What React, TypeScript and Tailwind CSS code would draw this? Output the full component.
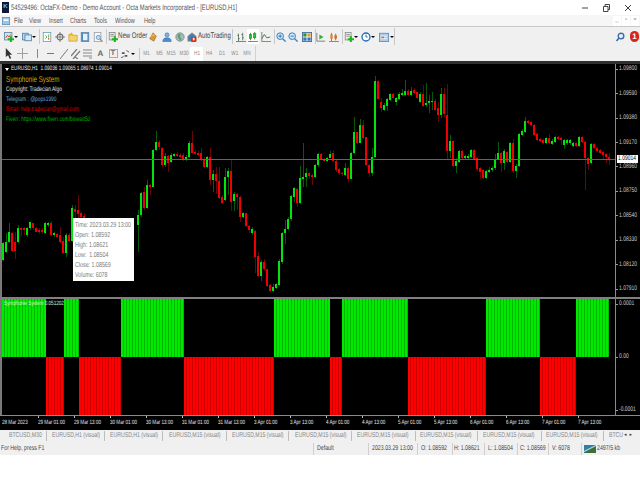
import type { ReactNode } from "react"

type Candle = [string, number, number, number?, number?]

// body top, body bottom, wick high, wick low. values are read off 3x crops, so they are divided by 3 below
const zoneA: Candle[] = [
  ["g", 190, 240, 185, 242], ["g", 185, 215, 160, 218], ["g", 155, 185, 130, 190], ["r", 158, 212, 155, 215],
  ["r", 185, 212, 155, 238], ["g", 145, 185, 135, 190], ["r", 145, 150, 140, 168], ["r", 145, 150, 142, 165],
  ["g", 145, 165, 140, 170], ["g", 127, 145, 125, 150], ["r", 130, 145, 128, 150], ["r", 145, 155, 142, 157],
  ["r", 150, 157], ["r", 150, 157], ["g", 130, 160, 125, 162], ["g", 130, 135, 125, 140], ["r", 130, 165, 122, 168],
  ["g", 160, 165], ["r", 163, 170], ["r", 165, 185, 140, 188], ["r", 183, 218, 170, 220], ["g", 165, 218, 160, 232],
  ["r", 165, 182, 160, 185], ["g", 85, 182, 75, 185], ["r", 87, 95, 75, 120], ["r", 90, 102, 45, 125],
  ["r", 100, 110, 95, 125], ["r", 108, 120, 100, 130],
]
const zoneB: Candle[] = [
  ["g", 285, 315, 270, 396], ["g", 218, 285, 215, 290], ["r", 215, 265, 200, 270], ["g", 195, 265, 180, 268],
  ["r", 195, 200, 192, 225], ["g", 90, 200, 88, 202], ["g", 65, 90, 33, 92], ["r", 65, 82, 60, 90],
  ["r", 85, 135, 80, 142], ["g", 108, 135, 100, 140], ["r", 108, 130, 105, 155], ["g", 105, 125, 100, 130],
  ["g", 103, 107], ["r", 102, 107], ["r", 105, 110], ["r", 105, 118], ["g", 110, 118], ["g", 68, 110, 62, 113],
  ["r", 70, 98, 33, 100], ["r", 97, 102, 90, 105], ["r", 98, 104], ["r", 98, 118, 85, 122], ["r", 118, 142, 112, 145],
  ["g", 112, 142, 108, 145], ["r", 112, 180, 85, 195], ["g", 162, 180, 150, 215], ["r", 162, 182, 140, 222],
]
const zoneC: Candle[] = [
  ["r", 362, 415, 320, 418], ["r", 412, 428, 405, 432], ["g", 350, 420, 325, 422], ["g", 333, 352, 325, 405],
  ["r", 333, 425, 300, 452], ["g", 403, 422, 395, 452], ["r", 403, 412, 400, 450], ["r", 412, 470, 408, 485],
  ["g", 460, 472, 455, 475], ["r", 460, 498, 458, 500], ["r", 497, 510, 495, 520], ["g", 508, 520, 500, 524],
  ["r", 512, 590, 510, 640], ["r", 588, 648, 575, 650], ["g", 606, 648, 600, 662], ["r", 606, 628, 598, 632],
  ["r", 628, 678, 626, 682], ["r", 676, 692, 672, 696], ["g", 680, 692, 672, 695], ["g", 673, 685, 670, 688],
  ["g", 603, 675, 598, 678], ["g", 520, 605, 515, 612], ["g", 508, 520, 480, 552], ["g", 478, 508, 470, 510],
  ["g", 408, 478, 405, 482], ["g", 385, 410, 380, 425], ["r", 387, 428, 385, 440], ["g", 355, 428, 318, 432],
  ["g", 350, 358, 248, 380], ["g", 340, 352, 325, 382], ["r", 340, 348, 335, 358], ["r", 345, 352, 342, 375],
  ["g", 316, 352, 312, 355], ["g", 282, 316, 278, 320], ["r", 282, 298, 278, 300], ["r", 298, 303, 295, 306],
  ["g", 293, 303, 290, 305], ["g", 282, 293, 272, 295], ["r", 280, 303, 270, 306], ["r", 302, 330, 300, 335],
  ["r", 328, 340, 325, 345], ["r", 338, 343, 335, 348], ["g", 323, 345, 310, 348], ["r", 323, 358, 320, 365],
  ["g", 280, 356, 276, 358], ["g", 217, 280, 170, 283], ["r", 217, 248, 215, 252], ["g", 194, 248, 178, 250],
  ["r", 194, 233, 180, 236], ["r", 232, 315, 230, 318], ["r", 314, 340, 312, 352], ["g", 291, 340, 265, 348],
  ["g", 62, 291, 48, 294], ["r", 62, 116, 60, 118], ["r", 126, 145, 115, 155], ["g", 135, 150, 130, 153],
  ["g", 118, 137, 115, 152], ["g", 103, 120, 100, 122], ["r", 103, 115, 100, 118], ["g", 115, 125, 112, 135],
  ["g", 103, 117, 95, 120], ["g", 100, 104, 88, 108], ["g", 93, 105, 60, 108], ["r", 93, 106, 88, 108],
  ["g", 92, 104, 80, 107], ["r", 90, 98, 85, 102], ["r", 97, 115, 95, 118], ["g", 102, 125, 95, 128],
  ["r", 101, 138, 75, 142],
]
const zoneD: Candle[] = [
  ["g", 128, 135, 70, 140], ["g", 124, 128, 105, 160], ["g", 122, 127, 95, 150], ["r", 122, 150, 118, 152],
  ["r", 145, 165, 125, 185], ["g", 102, 165, 85, 175], ["r", 102, 162, 85, 172], ["r", 165, 272, 72, 298],
  ["g", 243, 272, 225, 295], ["r", 243, 318, 240, 320], ["g", 303, 318, 295, 338], ["g", 273, 305, 270, 308],
  ["r", 273, 293, 270, 296], ["g", 288, 294, 285, 298], ["g", 287, 293, 282, 296], ["g", 270, 290, 266, 294],
  ["r", 270, 296, 268, 298], ["r", 293, 328, 290, 332], ["r", 325, 335, 322, 358], ["r", 330, 355, 328, 358],
  ["g", 333, 353, 330, 356], ["g", 330, 336, 322, 340], ["g", 325, 330, 318, 335], ["g", 296, 325, 282, 330],
  ["g", 280, 297, 245, 300], ["r", 280, 308, 275, 335], ["g", 273, 310, 268, 330], ["r", 275, 307, 272, 310],
  ["g", 250, 305, 245, 308], ["r", 250, 333, 238, 340], ["g", 317, 333, 312, 355], ["g", 223, 318, 220, 322],
  ["g", 212, 225, 208, 228], ["g", 182, 215, 172, 218], ["r", 183, 190, 180, 193], ["r", 185, 195, 182, 198],
  ["r", 195, 225, 192, 228], ["r", 223, 240, 220, 243], ["r", 238, 244, 235, 247], ["r", 240, 248, 237, 251],
  ["g", 235, 248, 230, 252], ["r", 235, 250, 223, 253], ["g", 243, 251, 238, 255], ["g", 232, 245, 229, 248],
  ["r", 232, 238, 229, 241], ["r", 235, 240, 232, 255], ["g", 240, 255, 236, 268], ["g", 240, 250, 236, 254],
  ["g", 240, 248, 236, 256], ["g", 248, 257, 245, 260], ["r", 250, 258, 247, 262], ["g", 230, 258, 227, 262],
  ["r", 230, 245, 227, 248], ["r", 245, 295, 242, 390], ["r", 295, 312, 292, 330], ["g", 253, 310, 250, 313],
  ["r", 253, 265, 250, 268], ["r", 265, 273, 262, 276], ["r", 270, 280, 267, 283], ["r", 277, 285, 274, 296],
  ["r", 282, 292, 279, 308], ["r", 290, 298, 280, 315],
]

const zones: { start: number; y0: number; rows: Candle[] }[] = [
  { start: 0, y0: 180, rows: zoneA },
  { start: 45, y0: 120, rows: zoneB },
  { start: 72, y0: 60, rows: zoneC },
  { start: 141, y0: 60, rows: zoneD },
]

function PriceChart() {
  return (
    <svg viewBox="2 64 613 233" className="absolute inset-0 h-full w-full" shapeRendering="crispEdges">
      {zones.map((z) =>
        z.rows.map(([c, top, bottom, hi, lo], i) => {
          const x = 2 + (z.start + i) * 3
          const t = z.y0 + top / 3
          const b = z.y0 + bottom / 3
          const h = z.y0 + (hi ?? top - 5) / 3
          const l = z.y0 + (lo ?? bottom + 5) / 3
          return (
            <g key={z.start + i}>
              <rect x={x + 0.5} y={h} width={1} height={l - h} fill={c === "g" ? "#085808" : "#6a0505"} />
              <rect x={x} y={t} width={2} height={Math.max(b - t, 1)} fill={c === "g" ? "#00e60a" : "#f00000"} />
            </g>
          )
        }),
      )}
      <rect x={2} y={159} width={613} height={1} fill="#62646a" />
    </svg>
  )
}

const blocks: [number, number, string][] = [
  [2, 46, "g"], [46, 64, "r"], [64, 79, "g"], [79, 121, "r"], [121, 184, "g"], [184, 274, "r"], [274, 330, "g"],
  [330, 342, "r"], [342, 408, "g"], [408, 486, "r"], [486, 540, "g"], [540, 576, "r"], [576, 609, "g"],
]

function Histogram() {
  const bars: ReactNode[] = []
  blocks.forEach(([from, to, c]) => {
    const green = c === "g"
    bars.push(<rect key={from} x={from} y={green ? 299 : 357} width={to - from} height={58} fill={green ? "#00b800" : "#cc0000"} />)
    for (let x = from; x < to - 1; x += 3) {
      bars.push(<rect key={from + "-" + x} x={x} y={green ? 299 : 357} width={2} height={58} fill={green ? "#00ea00" : "#ff0000"} />)
    }
  })
  return (
    <svg viewBox="2 299 613 116" className="absolute inset-0 h-full w-full" shapeRendering="crispEdges">
      {bars}
    </svg>
  )
}

// the screenshot was squeezed horizontally, so all small text is narrowed the same way
function Sq({ children, className = "" }: { children: ReactNode; className?: string }) {
  return <span className={"inline-block origin-left scale-x-[0.74] whitespace-nowrap " + className}>{children}</span>
}

function Ic({ children }: { children: ReactNode }) {
  return (
    <svg viewBox="0 0 12 12" className="block h-[10px] w-[10px] shrink-0">
      {children}
    </svg>
  )
}

const Caret = () => (
  <span className="flex w-[4px] shrink-0 justify-center">
    <span className="h-0 w-0 border-x-2 border-t-2 border-x-transparent border-t-black" />
  </span>
)

const Plus = () => <path d="M7 5h2.500v2.500H12V10H9.500v2H7v-2H4.500V7.500H7z" fill="#1bb61b" />

const NewChart = () => (
  <Ic>
    <rect x="0.500" y="0.500" width="9" height="9" fill="#cfe2ee" stroke="#5c86a8" />
    <path d="M2 7l2-3 2 2 2-3" stroke="#d2342a" fill="none" />
    <Plus />
  </Ic>
)
const Profiles = () => (
  <Ic>
    <rect x="0.500" y="1.500" width="7" height="8" fill="#bcd6ec" stroke="#4d7fae" />
    <rect x="3.500" y="3.500" width="8" height="7" fill="#d9e9f6" stroke="#4d7fae" />
  </Ic>
)
const Market = () => (
  <Ic>
    <rect x="1.500" y="0.500" width="9" height="11" fill="#fff" stroke="#7b9ab4" />
    <path d="M4 4l2 2-2 2M8 3v3" stroke="#1bb61b" fill="none" />
    <path d="M8 6l-1 3h2z" fill="#e03a20" />
  </Ic>
)
const Cross = () => (
  <Ic>
    <circle cx="6" cy="6" r="3.500" fill="none" stroke="#6e6e6e" strokeWidth="1.300" />
    <path d="M6 0v12M0 6h12" stroke="#6e6e6e" />
  </Ic>
)
const Folder = () => (
  <Ic>
    <path d="M1 3h4l1 1h5v7H1z" fill="#f4d36b" stroke="#b58f2c" strokeWidth="0.700" />
    <path d="M4 0l1 2h2L5.400 3.200 6 5 4 4 2 5l.6-1.800L1 2h2z" fill="#f2b21e" />
  </Ic>
)
const Book = () => (
  <Ic>
    <rect x="1.500" y="0.500" width="9" height="11" fill="#3f7fc0" stroke="#6a8bab" />
    <rect x="3.500" y="2" width="5.500" height="8" fill="#e8f1f8" />
  </Ic>
)
const DocSearch = () => (
  <Ic>
    <rect x="1.500" y="0.500" width="8" height="11" fill="#f7f7f7" stroke="#9aa3ad" />
    <circle cx="6.500" cy="6.500" r="2.500" fill="#c5dff2" stroke="#5f8fb5" />
    <path d="M8.500 8.500l3 3" stroke="#a77a3d" strokeWidth="1.300" />
  </Ic>
)
const OrderIc = () => (
  <Ic>
    <rect x="1.500" y="0.500" width="7" height="9" fill="#e8e8e8" stroke="#8b8b8b" />
    <path d="M3 3h4M3 5h4" stroke="#8b8b8b" />
    <Plus />
  </Ic>
)
const Gold = () => (
  <Ic>
    <path d="M6 1l4 4-3 6-5-3z" fill="#d49a35" stroke="#96661a" strokeWidth="0.700" />
    <path d="M3 6l3-3 2 2" stroke="#f4d38c" fill="none" />
  </Ic>
)
const Person = () => (
  <Ic>
    <circle cx="6" cy="3.500" r="2.500" fill="#7fb0de" stroke="#3d78b5" strokeWidth="0.700" />
    <path d="M1 11.500c0-3.500 2-4.500 5-4.500s5 1 5 4.500z" fill="#4d8ccb" stroke="#2f6aa8" strokeWidth="0.700" />
  </Ic>
)
const Globe = () => (
  <Ic>
    <circle cx="6" cy="6" r="5" fill="#a9b9c4" stroke="#7a8a96" />
    <path d="M4 2l3 1-1 3 2 2-2 3-1-3-2-2z" fill="#5fa066" />
  </Ic>
)
const Shield = () => (
  <Ic>
    <path d="M1 5l5-4 5 4v6H1z" fill="#3f7dc2" stroke="#cf8a2a" strokeWidth="0.800" />
    <rect x="5" y="6" width="6" height="6" rx="1" fill="#e02a1c" />
    <rect x="7" y="7" width="2" height="3" fill="#fff" />
  </Ic>
)
const BarsIc = () => (
  <Ic>
    <path d="M3 2v9M1.500 4H3M3 8h1.500M8 1v9M6.500 3H8M8 7h1.500M0 11.500h12" stroke="#4e6b52" fill="none" />
  </Ic>
)
const CandlesIc = () => (
  <Ic>
    <path d="M3 1v9M8 0v9M0 11.500h12" stroke="#4e6b52" />
    <rect x="1.500" y="3" width="3" height="5" fill="#27c127" stroke="#2e6b2e" strokeWidth="0.500" />
    <rect x="6.500" y="2" width="3" height="5" fill="#27c127" stroke="#2e6b2e" strokeWidth="0.500" />
  </Ic>
)
const LineIc = () => (
  <Ic>
    <path d="M1 0v11.500h11" stroke="#6c6c6c" fill="none" />
    <path d="M1 8l3-5 3 4 4-1" stroke="#4e7a52" fill="none" strokeWidth="1.200" />
  </Ic>
)
const Mag = ({ sign }: { sign: string }) => (
  <Ic>
    <circle cx="5" cy="5" r="4" fill="#cfe6f7" stroke="#3b82c4" strokeWidth="1.200" />
    <path d={sign} stroke="#2467a8" />
    <path d="M8 8l3.500 3.500" stroke="#3b82c4" strokeWidth="1.600" />
  </Ic>
)
const Tile = () => (
  <Ic>
    <rect x="0.500" y="0.500" width="11" height="11" fill="#fff" stroke="#37648f" />
    <rect x="1.500" y="1.500" width="4" height="4" fill="#2f8f3a" />
    <rect x="6.500" y="1.500" width="4" height="4" fill="#d9a32c" />
    <rect x="1.500" y="6.500" width="4" height="4" fill="#3c78c0" />
    <rect x="6.500" y="6.500" width="4" height="4" fill="#3c78c0" />
  </Ic>
)
const Shift = () => (
  <Ic>
    <path d="M1 1v10h10" stroke="#6c6c6c" fill="none" />
    <path d="M4 3v6l5-3z" fill="#2fb52f" />
  </Ic>
)
const AutoScroll = () => (
  <Ic>
    <path d="M3 1v10M8 2v8M0 11.500h12" stroke="#6c6c6c" />
    <rect x="1.500" y="3" width="3" height="5" fill="#e08a2a" />
    <rect x="6.500" y="4" width="3" height="4" fill="#e0622a" />
  </Ic>
)
const Clock = () => (
  <Ic>
    <circle cx="6" cy="6" r="4.800" fill="#fff" stroke="#1f6fc0" strokeWidth="1.600" />
    <path d="M6 3v3h2" stroke="#1f4f80" fill="none" />
  </Ic>
)
const Calendar = () => (
  <Ic>
    <rect x="0.500" y="1.500" width="11" height="10" fill="#a9cdec" stroke="#5d8fbe" />
    <path d="M2 5h8M2 8h8" stroke="#fff" />
    <rect x="3" y="5.500" width="3" height="2" fill="#e26a3a" />
  </Ic>
)

const Sep = () => <span className="block h-[15px] w-px shrink-0 bg-[#c9c9c9]" />

function TitleBar() {
  return (
    <div className="flex h-[15px] shrink-0 items-center bg-white">
      <span className="ml-[2px] flex h-[11px] w-[7px] items-center justify-center bg-[#101838] text-[6px] font-bold text-[#5ac8fa]">K</span>
      <span className="ml-[2px] w-[500px] shrink-0 text-[7.900px] text-[#555]">
        <Sq>54529496: OctaFX-Demo - Demo Account - Octa Markets Incorporated - [EURUSD,H1]</Sq>
      </span>
      <div className="ml-auto flex items-center">
        <svg viewBox="0 0 8 8" className="mr-[13px] h-2 w-2">
          <path d="M1 4h6" stroke="#444" strokeWidth="1" />
        </svg>
        <svg viewBox="0 0 8 8" className="mr-[14px] h-2 w-2">
          <path d="M1.500 2.500h4.500v5h-4.500zM3 2.500v-2h4.500v5h-1.500" stroke="#444" fill="none" />
        </svg>
        <svg viewBox="0 0 8 8" className="mr-[8px] h-2 w-2">
          <path d="M1 1l6 6M7 1l-6 6" stroke="#444" />
        </svg>
      </div>
    </div>
  )
}

const menus: [string, string][] = [
  ["File", "w-[15px]"], ["View", "w-[20px]"], ["Insert", "w-[21px]"], ["Charts", "w-[24px]"], ["Tools", "w-[21px]"], ["Window", "w-[29px]"], ["Help", "w-[20px]"],
]

function MenuBar() {
  return (
    <div className="flex h-[12px] shrink-0 items-center border-b border-[#c8c8c8] bg-[#f6f6f6] text-[7.500px] text-[#555]">
      <svg viewBox="0 0 10 10" className="ml-[2px] mr-[4px] h-[10px] w-[8px]">
        <rect x="0.500" y="0.500" width="9" height="9" fill="#9cc5e8" stroke="#5b8fc2" />
        <rect x="2" y="3" width="6" height="2" fill="#fff" />
      </svg>
      {menus.map(([m, c]) => (
        <span key={m} className={c}>
          <Sq>{m}</Sq>
        </span>
      ))}
      <div className="ml-auto flex items-center gap-px pr-px text-[6px] text-[#777]">
        <span className="flex h-[10px] w-[8px] items-center justify-center bg-white">_</span>
        <span className="flex h-[10px] w-[8px] items-center justify-center bg-white">▫</span>
        <span className="flex h-[10px] w-[8px] items-center justify-center bg-white">×</span>
      </div>
    </div>
  )
}

function MainToolbar() {
  return (
    <div className="flex h-[19px] shrink-0 items-center bg-[#f0f0f0] text-[8.200px] text-[#444]">
      <div className="flex h-[17px] w-[395px] items-center border-r border-[#c8c8c8] pl-[4px]">
        <NewChart />
        <Caret />
        <span className="ml-[4px]"><Profiles /></span>
        <Caret />
        <span className="ml-[3px]"><Sep /></span>
        <span className="ml-[2px]"><Market /></span>
        <span className="ml-[3px]"><Cross /></span>
        <span className="ml-[3px]"><Folder /></span>
        <span className="ml-[2px]"><Book /></span>
        <span className="ml-[3px]"><DocSearch /></span>
        <span className="ml-[3px]"><Sep /></span>
        <span className="ml-[1px]"><OrderIc /></span>
        <span className="w-[29px] shrink-0"><Sq>New Order</Sq></span>
        <span className="ml-[1px]"><Gold /></span>
        <span className="ml-[4px]"><Person /></span>
        <span className="ml-[3px]"><Globe /></span>
        <span className="ml-[2px]"><Shield /></span>
        <span className="ml-[1px] w-[33px] shrink-0"><Sq>AutoTrading</Sq></span>
        <span className="ml-[1px]"><Sep /></span>
        <span className="ml-[3px]"><BarsIc /></span>
        <span className="ml-[1px] flex h-[15px] w-[12px] items-center justify-center bg-white"><CandlesIc /></span>
        <span className="ml-[2px]"><LineIc /></span>
        <span className="ml-[3px]"><Sep /></span>
        <span className="ml-[1px]"><Mag sign="M3 5h4M5 3v4" /></span>
        <span className="ml-[2px]"><Mag sign="M3 5h4" /></span>
        <span className="ml-[4px]"><Tile /></span>
        <span className="ml-[3px]"><Sep /></span>
        <span><Shift /></span>
        <span className="ml-[3px]"><AutoScroll /></span>
        <span className="ml-[3px]"><Sep /></span>
        <span className="ml-[1px]"><OrderIc /></span>
        <Caret />
        <span className="ml-[3px]"><Clock /></span>
        <Caret />
        <span className="ml-[4px]"><Calendar /></span>
        <span className="ml-[1px]"><Caret /></span>
      </div>
      <div className="ml-auto flex items-center pr-[1px]">
        <svg viewBox="0 0 10 10" className="mr-[5px] h-[10px] w-[10px]">
          <circle cx="6" cy="4" r="2.800" fill="none" stroke="#3a6ea8" strokeWidth="1.400" />
          <path d="M4 6L1.500 9" stroke="#3a6ea8" strokeWidth="1.600" />
        </svg>
        <span className="flex h-[11px] w-[9px] items-center justify-center rounded-full bg-[#d6261c] text-[8px] font-bold text-white">1</span>
      </div>
    </div>
  )
}

const periods = ["M1", "M5", "M15", "M30", "H1", "H4", "D1", "W1", "MN"]

function DrawToolbar() {
  return (
    <div className="flex h-[15px] shrink-0 items-center bg-[#f0f0f0]">
      <div className="flex h-[15px] w-[256px] items-center border-r border-[#d2d2d2] pl-[2px] text-[#777]">
        <span className="flex w-[13px] justify-center">
          <svg viewBox="0 0 10 12" className="h-[11px] w-[9px]">
            <path d="M2 0v10l2.500-2 2 4 1.500-1-2-3.500h3z" fill="#333" />
          </svg>
        </span>
        <span className="flex w-[14px] justify-center">
          <svg viewBox="0 0 12 12" className="h-[11px] w-[11px]">
            <path d="M6 0v12M0 6h12" stroke="#999" />
          </svg>
        </span>
        <span className="ml-[1px] flex w-[14px] justify-center">
          <span className="h-[9px] w-px bg-[#888]" />
        </span>
        <span className="flex w-[13px] justify-center">
          <span className="h-px w-[7px] bg-[#777]" />
        </span>
        <span className="flex w-[13px] justify-center">
          <svg viewBox="0 0 8 10" className="h-[10px] w-[8px]">
            <path d="M0 10L8 0" stroke="#777" />
          </svg>
        </span>
        <span className="flex w-[12px] justify-center">
          <svg viewBox="0 0 10 10" className="h-[10px] w-[10px]">
            <path d="M0 7L6 0M2 10l7-8M4 8l3 2" stroke="#777" strokeWidth="1.200" fill="none" />
          </svg>
        </span>
        <span className="flex w-[12px] justify-center">
          <svg viewBox="0 0 10 10" className="h-[10px] w-[10px]">
            <path d="M0 1h9M0 4h9M0 7h9M6 9h3" stroke="#888" fill="none" />
          </svg>
        </span>
        <span className="w-[13px] text-center text-[8px] font-bold leading-none text-[#666]">A</span>
        <span className="flex w-[12px] justify-center">
          <span className="flex h-[9px] w-[9px] items-center justify-center border border-[#aaa] text-[7px] font-bold leading-none text-[#666]">T</span>
        </span>
        <span className="flex w-[12px] justify-center">
          <svg viewBox="0 0 10 10" className="h-[10px] w-[9px]">
            <path d="M1 3h3v2H1zM4 6h3v2H4z" fill="#555" />
            <path d="M6 1l3 2M0 9l3-1" stroke="#555" fill="none" />
          </svg>
        </span>
        <Caret />
        <span className="ml-[4px] h-[12px] w-px bg-[#c9c9c9]" />
        <div className="flex text-[6.300px] text-[#888]">
          {periods.map((p) => (
            <span key={p} className={p === "H1" ? "flex h-[14px] w-[12.600px] items-center justify-center bg-white" : "flex h-[14px] w-[12.600px] items-center justify-center"}>
              <span className="inline-block scale-x-[0.74] whitespace-nowrap">{p}</span>
            </span>
          ))}
        </div>
      </div>
    </div>
  )
}

const prices = ["1.09800", "1.09590", "1.09380", "1.09170", "1.08960", "1.08750", "1.08540", "1.08330", "1.08120", "1.07910"]

const ticks = [
  "29 Mar 01:00", "29 Mar 13:00", "30 Mar 01:00", "30 Mar 13:00", "31 Mar 01:00", "31 Mar 13:00", "3 Apr 01:00", "3 Apr 13:00",
  "4 Apr 01:00", "4 Apr 13:00", "5 Apr 01:00", "5 Apr 13:00", "6 Apr 01:00", "6 Apr 13:00", "7 Apr 01:00", "7 Apr 13:00",
]

const Tick = () => <span className="mr-[1px] h-px w-[2px] shrink-0 bg-[#9a9a9a]" />

function Chart() {
  return (
    <div className="flex h-[369px] shrink-0 flex-col border-t-[3px] border-t-[#303030] bg-black">
      <div className="flex h-[233px] shrink-0">
        <div className="h-full w-[2px] bg-[#7a7a7a]" />
        <div className="relative h-full w-[613px] overflow-hidden">
          <PriceChart />
          <div className="absolute left-[3px] top-[1px] flex items-center text-[6.300px] leading-[8px] text-[#e8e8e8]">
            <span className="mr-[2px] h-0 w-0 border-x-[2px] border-t-[3px] border-x-transparent border-t-white" />
            <Sq>EURUSD,H1&nbsp; 1.09036 1.09065 1.08974 1.09014</Sq>
          </div>
          <div className="absolute left-[4px] top-[10px] flex flex-col items-start text-[6.600px] leading-[10px]">
            <Sq className="text-[8.400px] leading-[11px] text-[#d4a800]">Symphonie System</Sq>
            <Sq className="text-[#e8e8e8]">Copyright: Tradecian Algo</Sq>
            <Sq className="text-[#64a6d8]">Telegram : @pops1990</Sq>
            <Sq className="text-[#d80000]">Email: help.tradecian@gmail.com</Sq>
            <Sq className="text-[#00b000]">Fiverr: https://www.fiverr.com/biswait50</Sq>
          </div>
          <div className="absolute left-[71px] top-[154px] flex h-[63px] w-[61px] flex-col items-start justify-center bg-white pl-[2px] text-[7.200px] leading-[10px] text-[#7c7c7c]">
            <Sq>Time: 2023.03.29 13:00</Sq>
            <Sq>Open: 1.08592</Sq>
            <Sq>High: 1.08621</Sq>
            <Sq>Low:&nbsp; 1.08504</Sq>
            <Sq>Close: 1.08569</Sq>
            <Sq>Volume: 6078</Sq>
          </div>
        </div>
        <div className="relative flex h-full flex-1 flex-col overflow-hidden border-l border-l-[#8a8a8a] text-[6.700px] text-[#cfcfcf]">
          {prices.map((p) => (
            <span key={p} className="flex h-[24.440px] shrink-0 items-center first:mt-[-7px]">
              <Tick />
              <Sq>{p}</Sq>
            </span>
          ))}
          <span className="absolute left-[1px] top-[91px] h-[8px] w-[21px] bg-white pl-[1px] text-[6.700px] leading-[8px] text-black">
            <Sq>1.09014</Sq>
          </span>
        </div>
      </div>
      <div className="h-[2px] shrink-0 bg-[#808080]" />
      <div className="flex h-[116px] shrink-0">
        <div className="h-full w-[2px] bg-[#7a7a7a]" />
        <div className="relative h-full w-[613px] overflow-hidden">
          <Histogram />
          <span className="absolute left-[2px] top-[1px] text-[6.200px] leading-[8px] text-[#d6f5d6]">
            <Sq>Symphonie System 0.051202</Sq>
          </span>
        </div>
        <div className="flex h-full flex-1 flex-col justify-between overflow-hidden border-l border-l-[#8a8a8a] py-[1px] text-[6.700px] leading-[8px] text-[#cfcfcf]">
          {["0.0001", "0.00", "-0.0001"].map((v) => (
            <span key={v} className="flex items-center">
              <Tick />
              <Sq>{v}</Sq>
            </span>
          ))}
        </div>
      </div>
      <div className="flex h-[15px] shrink-0 border-t border-t-[#8a8a8a] pl-[2px] text-[6.200px] text-[#e6e6e6]">
        <span className="w-[36px] shrink-0 pt-[2px]">
          <Sq>28 Mar 2023</Sq>
        </span>
        {ticks.map((t) => (
          <span key={t} className="relative w-[36px] shrink-0 pt-[2px]">
            <span className="absolute left-0 top-0 h-[2px] w-px bg-[#bbbbbb]" />
            <Sq>{t}</Sq>
          </span>
        ))}
      </div>
    </div>
  )
}

const tabs: [string, string][] = [
  ["BTCUSD,M30", "w-[47px] pl-[9px]"],
  ["EURUSD,H1 (visual)", "w-[58px] pl-[5px]"],
  ["EURUSD,H1 (visual)", "w-[58px] pl-[5px]"],
  ["EURUSD,M15 (visual)", "w-[64px] pl-[6px]"],
  ["EURUSD,M15 (visual)", "w-[62px] pl-[5px]"],
  ["EURUSD,M15 (visual)", "w-[63px] pl-[6px]"],
  ["EURUSD,M15 (visual)", "w-[64px] pl-[5px]"],
  ["EURUSD,M15 (visual)", "w-[62px] pl-[4px]"],
  ["EURUSD,M15 (visual)", "w-[64px] pl-[5px]"],
  ["EURUSD,M15 (visual)", "w-[62px] pl-[4px]"],
]

function TabBar() {
  return (
    <div className="flex h-[12px] shrink-0 items-center overflow-hidden bg-[#f0f0f0] text-[7px] text-[#858585]">
      {tabs.map(([t, c], i) => (
        <span key={i} className={"flex h-[10px] shrink-0 items-center border-r border-r-[#bdbdbd] " + c}>
          <Sq>{t}</Sq>
        </span>
      ))}
      <span className="w-[20px] shrink-0 pl-[5px]">
        <Sq>BTCU</Sq>
      </span>
      <span className="flex shrink-0 gap-[3px] text-[5px] text-[#444]">
        <span>◂</span>
        <span>▸</span>
      </span>
    </div>
  )
}

const cells: [string, string][] = [
  ["Default", "w-[55px] pl-[3px]"],
  ["2023.03.29 13:00", "w-[49px] pl-[3px]"],
  ["O: 1.08592", "w-[35px] pl-[3px]"],
  ["H: 1.08621", "w-[32px] pl-[1px]"],
  ["L: 1.08504", "w-[33px] pl-[3px]"],
  ["C: 1.08569", "w-[31px] pl-[2px]"],
  ["V: 6078", "w-[33px] pl-[3px]"],
]

function StatusBar() {
  return (
    <div className="flex h-[13px] shrink-0 items-center bg-[#f0f0f0] text-[7.100px] text-[#444]">
      <span className="w-[313px] shrink-0 pl-[1px]">
        <Sq>For Help, press F1</Sq>
      </span>
      {cells.map(([t, c]) => (
        <span key={t} className={"flex h-[12px] shrink-0 items-center border-l border-l-[#cfcfcf] " + c}>
          <Sq>{t}</Sq>
        </span>
      ))}
      <span className="flex h-[12px] items-center border-l border-l-[#cfcfcf] pl-[2px]">
        <svg viewBox="0 0 12 8" className="h-2 w-3 shrink-0">
          <rect width="12" height="8" fill="#2f7fa8" />
          <path d="M0 8L12 1v7z" fill="#3e6f3a" />
          <path d="M0 6L12 0v1L0 7z" fill="#d8e8d0" />
        </svg>
        <Sq className="ml-px">2497/5 kb</Sq>
      </span>
    </div>
  )
}

export default function App() {
  return (
    <div className="flex h-[480px] w-[640px] flex-col overflow-hidden bg-white font-['Liberation_Sans',sans-serif] [text-rendering:geometricPrecision]">
      <TitleBar />
      <MenuBar />
      <MainToolbar />
      <DrawToolbar />
      <Chart />
      <TabBar />
      <StatusBar />
    </div>
  )
}
